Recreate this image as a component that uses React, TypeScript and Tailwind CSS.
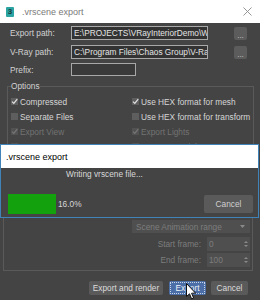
import React from "react";

const font = { fontFamily: '"Liberation Sans", Arial, sans-serif' };

function Check({ checked, disabled }: { checked?: boolean; disabled?: boolean }) {
  return (
    <div className={`w-[7px] h-[7px] shrink-0 flex items-center justify-center ${disabled ? "bg-[#525252]" : "bg-[#5e5e5e]"}`}>
      {checked && (
        <svg width="7" height="7" viewBox="0 0 7 7">
          <path d="M1 3.6 L2.8 5.4 L6.2 1.2" fill="none" stroke={disabled ? "#767676" : "#e0e0e0"} strokeWidth="1.3" />
        </svg>
      )}
    </div>
  );
}

function CbItem({ label, checked, disabled }: { label: string; checked?: boolean; disabled?: boolean }) {
  return (
    <div className="flex items-center gap-[2px] h-[15px] whitespace-nowrap">
      <Check checked={checked} disabled={disabled} />
      <span className={disabled ? "text-[#737373]" : "text-[#d6d6d6]"}>{label}</span>
    </div>
  );
}

function PathRow({ label, value, top, h }: { label: string; value?: string; top: string; h: string }) {
  return (
    <div className={`flex items-center pl-[10px] ${top}`}>
      <div className="w-[61px] text-[#d2d2d2]">{label}</div>
      {value !== undefined ? (
        <>
          <div className={`w-[137px] ${h} border border-[#a8a8a8] bg-[#333333] text-[#e4e4e4] overflow-hidden whitespace-nowrap flex items-center pl-[2px] leading-none`}>
            {value}
          </div>
          <div className="w-[26px]" />
          <div className="w-[13px] h-[13px] bg-[#5c5c5c] rounded-[2px] text-[#d0d0d0] flex items-end justify-center leading-[9px] text-[8px]">...</div>
        </>
      ) : (
        <div className={`w-[65px] ${h} border border-[#a8a8a8] bg-[#3a3a3a]`} />
      )}
    </div>
  );
}

function Spin({ label, value }: { label: string; value: string }) {
  return (
    <div className="flex items-center justify-end h-[16px]">
      <span className="text-[#7d7d7d] mr-[6px]">{label}</span>
      <div className="w-[43px] h-[14px] bg-[#4f4f4f] flex items-center justify-between pl-[2px] pr-[2px]">
        <span className="text-[#7d7d7d]">{value}</span>
        <svg width="4" height="8" viewBox="0 0 4 8">
          <path d="M0 3 L2 1 L4 3 Z M0 5 L2 7 L4 5 Z" fill="#8a8a8a" />
        </svg>
      </div>
    </div>
  );
}

export default function App() {
  return (
    <div className="relative w-[260px] h-[300px] overflow-hidden bg-[#444444] text-[8.3px] leading-[10px]" style={font}>
      {/* title bar */}
      <div className="h-[23px] bg-white flex items-center pl-[6px] pr-[8px]">
        <div className="w-[8px] h-[10px] bg-[#2aa5a3] rounded-[1px] flex items-center justify-center text-[#1a3c3c] text-[8px] font-bold leading-none">3</div>
        <span className="ml-[8px] text-[#7a7a7a] text-[9px]">.vrscene export</span>
        <div className="flex-1" />
        <svg width="9" height="9" viewBox="0 0 9 9">
          <path d="M0.5 0.5 L8.5 8.5 M8.5 0.5 L0.5 8.5" stroke="#8a8a8a" strokeWidth="0.9" />
        </svg>
      </div>

      <PathRow label="Export path:" value="E:\PROJECTS\VRayInteriorDemo\Wi" top="mt-[3px]" h="h-[14px]" />
      <PathRow label="V-Ray path:" value="C:\Program Files\Chaos Group\V-Ray" top="mt-[5px]" h="h-[14px]" />
      <PathRow label="Prefix:" top="mt-[4px]" h="h-[13px]" />

      {/* Options group */}
      <fieldset className="ml-[7px] w-[246px] mt-[5px] border border-[#5a5a5a] px-[3px] pb-[4px]">
        <legend className="text-[#d2d2d2] px-0 leading-[10px]">Options</legend>
        <div className="grid grid-cols-[121px_1fr] pt-[3px]">
          <CbItem label="Compressed" checked />
          <CbItem label="Use HEX format for mesh" checked />
          <CbItem label="Separate Files" />
          <CbItem label="Use HEX format for transform" />
          <CbItem label="Export View" checked disabled />
          <CbItem label="Export Lights" checked disabled />
          <CbItem label="Export Geometry" checked disabled />
          <CbItem label="Export Materials" checked disabled />
        </div>
      </fieldset>

      {/* Animation group */}
      <div className="ml-[3px] w-[250px] mt-[4px] border border-[#5a5a5a] pr-[2px] pt-[56px] pb-[2px]">
        <div className="flex justify-end">
          <div className="w-[118px] h-[13px] bg-[#4f4f4f] flex items-center justify-between pl-[4px] pr-[5px]">
            <span className="text-[#7d7d7d]">Scene Animation range</span>
            <svg width="5" height="3" viewBox="0 0 5 3">
              <path d="M0 0 L5 0 L2.5 3 Z" fill="#8a8a8a" />
            </svg>
          </div>
        </div>
        <div className="mt-[3px]">
          <Spin label="Start frame:" value="0" />
          <Spin label="End frame:" value="100" />
        </div>
      </div>

      {/* buttons */}
      <div className="flex justify-end pr-[12px] mt-[10px] gap-[5px]">
        <div className="w-[74px] h-[14px] bg-[#5a5a5a] rounded-[2px] text-[#dcdcdc] flex items-center justify-center">Export and render</div>
        <div className="w-[37px] h-[14px] bg-[#4b6ea6] rounded-[2px] p-[1px] ml-[1px]">
          <div className="w-full h-full border border-dotted border-[#c9d6ea] text-[#eef2f8] flex items-center justify-center">Export</div>
        </div>
        <div className="w-[37px] h-[14px] bg-[#5a5a5a] rounded-[2px] text-[#dcdcdc] flex items-center justify-center">Cancel</div>
      </div>

      {/* progress dialog */}
      <div className="absolute left-0 top-[144px] w-[259px] h-[74px] border border-[#3f83b8] bg-[#444444] flex flex-col">
        <div className="h-[23px] bg-white flex items-center pl-[5px] text-black text-[9px]">.vrscene export</div>
        <div className="pl-[65px] pt-[1px] text-[#d8d8d8]">Writing vrscene file...</div>
        <div className="flex items-center mt-[15px] pl-[7px] pr-[5px]">
          <div className="w-[48px] h-[20px] bg-[#13a10e]" />
          <span className="ml-[2px] text-[#d8d8d8]">16.0%</span>
          <div className="flex-1" />
          <div className="w-[49px] h-[18px] bg-[#5a5a5a] rounded-[2px] text-[#d0d0d0] flex items-center justify-center">Cancel</div>
        </div>
      </div>

      {/* mouse cursor */}
      <svg className="absolute left-[186px] top-[283px]" width="11" height="17" viewBox="0 0 11 17">
        <path d="M0.5 0.5 L0.5 13.5 L3.5 10.8 L5.6 15.8 L7.6 15 L5.6 10.2 L9.6 10.2 Z" fill="#ffffff" stroke="#111111" strokeWidth="1" strokeLinejoin="round" />
      </svg>
    </div>
  );
}
